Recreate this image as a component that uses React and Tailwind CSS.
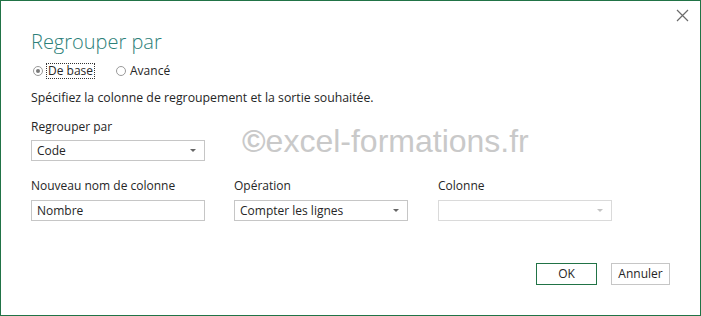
export default function App() {
  return (
    <div className="relative h-[316px] w-[701px] overflow-hidden border border-[#217346] bg-white font-['Open_Sans',sans-serif] text-[#262626]">
      <button className="absolute right-[10px] top-[6px] flex h-[16px] w-[16px] items-center justify-center text-[#666]">
        <svg width="13" height="13" viewBox="0 0 13 13" fill="none" stroke="#6b6b6b" strokeWidth="1.2">
          <path d="M1 1 L12 12 M12 1 L1 12" />
        </svg>
      </button>

      <div className="pl-[30px] pt-[28px]">
        <h1 className="text-[20px] font-light leading-[26px] text-[#2c8079]">Regrouper par</h1>

        <div className="mt-[8px] flex items-center text-[12px] leading-[14px]">
          <span className="ml-[2px] flex h-[10px] w-[10px] items-center justify-center rounded-full border border-[#9a9a9a]">
            <span className="h-[4px] w-[4px] rounded-full bg-[#7a7a7a]" />
          </span>
          <span className="ml-[3px] border border-dotted border-[#333] px-[1px]">De base</span>
          <span className="ml-[21px] h-[10px] w-[10px] rounded-full border border-[#9a9a9a]" />
          <span className="ml-[4px]">Avancé</span>
        </div>

        <p className="mt-[11px] text-[12.3px] leading-[16px]">Spécifiez la colonne de regroupement et la sortie souhaitée.</p>

        <div className="relative">
          <p className="mt-[13px] text-[12px] leading-[16px]">Regrouper par</p>
          <div className="mt-[5px] flex h-[21px] w-[174px] items-center justify-between border border-[#c6c6c6] pl-[5px] pr-[8px] text-[12px]">
            <span>Code</span>
            <span className="h-0 w-0 border-x-[3px] border-t-[3px] border-x-transparent border-t-[#666]" />
          </div>
          <div className="absolute left-[211px] top-[3px] font-['Liberation_Sans',Arial,sans-serif] text-[32px] leading-[38px] text-[#c9c9c9]">
            <span className="font-bold">©</span>excel-formations.fr
          </div>
        </div>

        <div className="mt-[17px] flex text-[12px]">
          <div className="w-[174px]">
            <p className="leading-[16px]">Nouveau nom de colonne</p>
            <div className="mt-[6px] flex h-[21px] items-center border border-[#c6c6c6] pl-[5px]">Nombre</div>
          </div>
          <div className="ml-[29px] w-[174px]">
            <p className="leading-[16px]">Opération</p>
            <div className="mt-[6px] flex h-[21px] items-center justify-between border border-[#c6c6c6] pl-[5px] pr-[8px]">
              <span>Compter les lignes</span>
              <span className="h-0 w-0 border-x-[3px] border-t-[3px] border-x-transparent border-t-[#666]" />
            </div>
          </div>
          <div className="ml-[30px] w-[174px]">
            <p className="leading-[16px]">Colonne</p>
            <div className="mt-[6px] flex h-[21px] items-center justify-end border border-[#dadada] pr-[8px]">
              <span className="h-0 w-0 border-x-[3px] border-t-[3px] border-x-transparent border-t-[#c4c4c4]" />
            </div>
          </div>
        </div>
      </div>

      <div className="mt-[42px] flex justify-end gap-[14px] pr-[30px] text-[12px]">
        <button className="h-[22px] w-[61px] border border-[#217346] text-[#262626]">OK</button>
        <button className="h-[22px] w-[59px] border border-[#c6c6c6] text-[#262626]">Annuler</button>
      </div>
    </div>
  );
}
